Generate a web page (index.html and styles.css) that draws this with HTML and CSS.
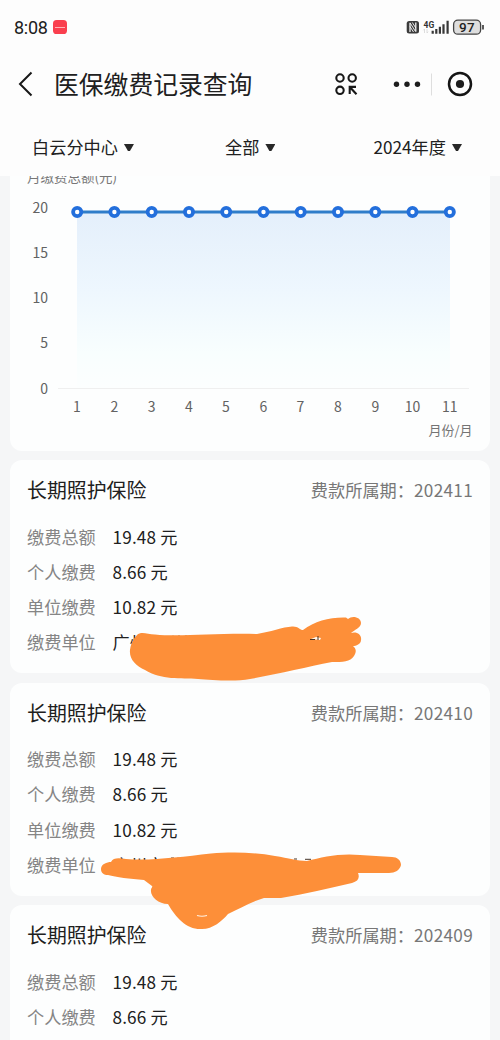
FILE: index.html
```html
<!DOCTYPE html>
<html lang="zh-CN">
<head>
<meta charset="utf-8">
<title>医保缴费记录查询</title>
<link rel="stylesheet" href="styles.css">
</head>
<body>
<div class="screen">
  <header class="top">
    <div class="status">
      <span class="clock">8:08</span>
      <svg class="app-badge" width="14" height="14" viewBox="0 0 14 14"><rect width="14" height="14" rx="3.6" fill="#fa3f4e"/><path d="M2 7.5h10" stroke="#ffb3b6" stroke-width="1"/></svg>
      <svg class="phone-icons" width="80" height="18" viewBox="0 0 80 18">
        <rect x="1.700" y="2.900" width="12.300" height="12.600" rx="2.500" fill="#3b3b3b"/>
        <path d="M5 4.800V14M10.800 4.400v9.400" stroke="#fdfdfd" stroke-width="1.200"/>
        <path d="M5.300 5.200l5 8M7.300 4.500l3.500 5.500M5 8.500l3.500 5.500" stroke="#fdfdfd" stroke-width=".9"/>
        <text class="network" x="18.500" y="9.500">4G</text>
        <path d="M19.500 15v-4M18.300 12.300l1.200-1.300M22 11v4M22 15l1.200-1.300" stroke="#d4d4d4" stroke-width=".8"/>
        <path d="M27.700 15.800v-3M31.300 15.800v-4.800M34.900 15.800v-7M38.500 15.800v-9.500M42.600 15.800V2.700" stroke="#383838" stroke-width="2.200"/>
        <rect x="48.600" y="2.200" width="27" height="14" rx="4.300" fill="#dedede" stroke="#444" stroke-width="1.300"/>
        <path d="M78 7v4.500" stroke="#333" stroke-width="1.600"/>
        <text class="battery" x="62" y="14">97</text>
      </svg>
    </div>
    <div class="nav">
      <svg class="back" width="18" height="28" viewBox="0 0 18 28"><path d="M14.500 2.500L3 14l11.500 11.500" fill="none" stroke="#181818" stroke-width="2"/></svg>
      <h1>医保缴费记录查询</h1>
      <svg class="nav-icons" width="145" height="32" viewBox="0 0 145 32">
        <g fill="none" stroke="#171717" stroke-width="2.100"><circle cx="10" cy="10" r="3.700"/><circle cx="22.200" cy="10" r="3.700"/><circle cx="10" cy="22.300" r="3.700"/><path d="M26 18.900H19.700V26M20 19.200l6.500 7"/></g>
        <g fill="#1d1d1d"><circle cx="66.500" cy="16.300" r="2.700"/><circle cx="77" cy="16.300" r="2.700"/><circle cx="87.500" cy="16.300" r="2.700"/><circle cx="130" cy="16" r="4.100"/></g>
        <path d="M101.500 5.500v22" stroke="#dedede"/>
        <circle cx="130" cy="16" r="11" fill="none" stroke="#151515" stroke-width="2.500"/>
      </svg>
    </div>
    <div class="filters">
      <span class="filter">白云分中心<i class="caret"></i></span>
      <span class="filter middle">全部<i class="caret"></i></span>
      <span class="filter">2024年度<i class="caret"></i></span>
    </div>
  </header>
  <main class="content">
    <section class="card chart-card">
      <div class="chart-title">月缴费总额(元)</div>
      <svg class="chart" width="480" height="260" viewBox="10 185 480 260">
        <defs><linearGradient id="area" x1="0" y1="0" x2="0" y2="1"><stop offset="0" stop-color="#e4effb"/><stop offset=".45" stop-color="#eef7fe"/><stop offset=".8" stop-color="#f8fefe"/><stop offset="1" stop-color="#fcfefe"/></linearGradient></defs>
        <path d="M77 212H450V388H77Z" fill="url(#area)"/>
        <path d="M58 388.500H469" stroke="#efefef"/>
        <path d="M77 212H450" stroke="#2f7dc9" stroke-width="3"/>
        <g class="points"><circle cx="77.200" cy="212" r="4.100"/><circle cx="114.400" cy="212" r="4.100"/><circle cx="151.700" cy="212" r="4.100"/><circle cx="189" cy="212" r="4.100"/><circle cx="226.200" cy="212" r="4.100"/><circle cx="263.500" cy="212" r="4.100"/><circle cx="300.700" cy="212" r="4.100"/><circle cx="338" cy="212" r="4.100"/><circle cx="375.300" cy="212" r="4.100"/><circle cx="412.500" cy="212" r="4.100"/><circle cx="449.800" cy="212" r="4.100"/></g>
        <g class="axis y-axis"><text x="48" y="213">20</text><text x="48" y="258">15</text><text x="48" y="303">10</text><text x="48" y="348">5</text><text x="48" y="393.500">0</text></g>
        <g class="axis x-axis"><text x="77" y="412">1</text><text x="114.300" y="412">2</text><text x="151.600" y="412">3</text><text x="189" y="412">4</text><text x="226" y="412">5</text><text x="263.500" y="412">6</text><text x="300.500" y="412">7</text><text x="338" y="412">8</text><text x="375.300" y="412">9</text><text x="412.500" y="412">10</text><text x="449.800" y="412">11</text></g>
        <text class="unit" x="472.500" y="434.500">月份/月</text>
      </svg>
    </section>

    <section class="card record">
      <div class="record-head"><h2>长期照护保险</h2><span>费款所属期：<b>202411</b></span></div>
      <dl>
        <dt>缴费总额</dt><dd>19.48 元</dd>
        <dt>个人缴费</dt><dd>8.66 元</dd>
        <dt>单位缴费</dt><dd>10.82 元</dd>
        <dt>缴费单位</dt><dd>广州</dd>
      </dl>
      <svg class="scribble first" width="240" height="70" viewBox="125 615 240 70">
        <path d="M173 635.500v2M179 635v3M186 635v3M192 635.500h4" stroke="#77695c"/>
        <path d="M130 650C131 642 135 637 137 635C141 631 147 634 155 634.500C180 637 215 633 257 634C270 632 283 627 292 626.500C298 626 300 630 303 630C315 621 330 617 346 617.500L348 619C352 615 361 617 361 623C361 628 354 630 351 633C357 631 362 635 361 640C361 644 356 646 353 646C357 649 356 653 354 656C350 662 343 662 332 662C307 667 278 674 250 679C235 682 212 680 198 679C181 678 161 680 145 670C136 666 129 659 130 650Z" fill="#fd8f39"/>
        <path d="M311 639l5-2 5 1-1 2Z" fill="#fff8ed"/><path d="M310 639.500h5M318 636v4" stroke="#48301e"/>
      </svg>
    </section>

    <section class="card record">
      <div class="record-head"><h2>长期照护保险</h2><span>费款所属期：<b>202410</b></span></div>
      <dl>
        <dt>缴费总额</dt><dd>19.48 元</dd>
        <dt>个人缴费</dt><dd>8.66 元</dd>
        <dt>单位缴费</dt><dd>10.82 元</dd>
        <dt>缴费单位</dt><dd>广州市</dd>
      </dl>
      <svg class="scribble second" width="310" height="85" viewBox="95 848 310 85">
        <path d="M171 858h3M178 857.500v2M294 859h3M305 859.300h6" stroke="#45352a"/>
        <path d="M101 869C101 864 107 862 111 862C113 857 120 858 126 859C151 861 180 857 211 853.500C230 852 254 852 275 856C289 858 297 861 307 861C322 857 340 853 360 855L392 857C397 857 401 860 401 865C400 870 395 873 389 873H358C360 878 358 881 352 883C329 888 305 894 281 898H264C250 902 239 909 228 914C222 921 213 929 202 929C187 930 176 918 168 904C158 904 150 896 151 890C151 888 153 887 152 886L144 880C130 879 116 877 108 875C104 875 101 873 101 869Z" fill="#fd8f39"/>
        <path d="M197 915.500q5 1.500 10 0" fill="none" stroke="#fff1e3" stroke-width="1.200"/>
      </svg>
    </section>

    <section class="card record">
      <div class="record-head"><h2>长期照护保险</h2><span>费款所属期：<b>202409</b></span></div>
      <dl>
        <dt>缴费总额</dt><dd>19.48 元</dd>
        <dt>个人缴费</dt><dd>8.66 元</dd>
      </dl>
    </section>
  </main>
</div>
</body>
</html>
```

FILE: styles.css
```css
* { box-sizing: border-box; }
body { margin: 0; font-family: "Noto Sans CJK SC", sans-serif; color: #202020; background: #f5f6f7; }
.screen { width: 500px; height: 1040px; overflow: hidden; display: flex; flex-direction: column; }
.top { height: 176px; flex: none; background: #fdfdfd; }
.status { height: 54px; display: flex; align-items: center; padding: 0 15px 0 14px; }
.clock { font: 18px/24px Roboto, sans-serif; letter-spacing: -.3px; width: 39px; padding-top: 1px; }
.phone-icons { margin-left: auto; }
.network { font: 700 8.5px Roboto, sans-serif; fill: #333; }
.battery { font: 500 13.5px Roboto, sans-serif; letter-spacing: .3px; fill: #222; text-anchor: middle; }
.nav { height: 60px; display: flex; align-items: center; padding-left: 17px; }
h1, h2 { font-weight: 400; margin: 0; }
h1 { font-size: 24.8px; line-height: 36px; margin-left: 19px; padding-bottom: 3px; white-space: nowrap; }
.nav-icons { margin-left: auto; margin-right: 25px; }
.filters { height: 66px; display: flex; justify-content: space-between; padding: 0 38px 0 32px; line-height: 64px; font-size: 17.2px; }
.filter { display: flex; align-items: center; gap: 6px; }
.middle { margin-right: 7px; }
.caret { width: 10px; height: 7px; background: #282828; clip-path: polygon(0 0, 100% 0, 60% 100%, 40% 100%); margin-top: 1px; }
.content { flex: 1; overflow: hidden; padding: 0 10px; display: flex; flex-direction: column; gap: 9.5px; }
.card { background: #fdfefe; border-radius: 12px; flex: none; position: relative; }
.chart-card { height: 274.5px; border-radius: 0 0 12px 12px; }
.chart-title { height: 9px; padding-left: 17px; font-size: 13.5px; line-height: 0; color: #777; overflow: hidden; }
.chart { display: block; }
.points { fill: #fff; stroke: #236fdc; stroke-width: 3.8; }
.axis { font-size: 14px; fill: #626262; }
.y-axis { text-anchor: end; }
.x-axis { text-anchor: middle; }
.unit { font-size: 13px; fill: #747474; text-anchor: end; }
.record { height: 213px; padding: 16px 17px 0; }
.record-head { display: flex; justify-content: space-between; height: 28px; line-height: 27px; }
h2 { font-size: 19.9px; line-height: 27px; }
.record-head span { font-size: 17.2px; color: #777; }
.record-head b { font-weight: 400; letter-spacing: .3px; }
dl { display: grid; grid-template-columns: 85.5px 1fr; grid-auto-rows: 35.3px; line-height: 35.3px; margin: 14.6px 0 0; font-size: 17.2px; }
dt { color: #858585; }
dd { margin: 0; color: #202020; letter-spacing: .15px; }
.scribble { position: absolute; z-index: 1; }
.first { left: 115px; top: 155px; }
.second { left: 85px; top: 165.500px; }
```
